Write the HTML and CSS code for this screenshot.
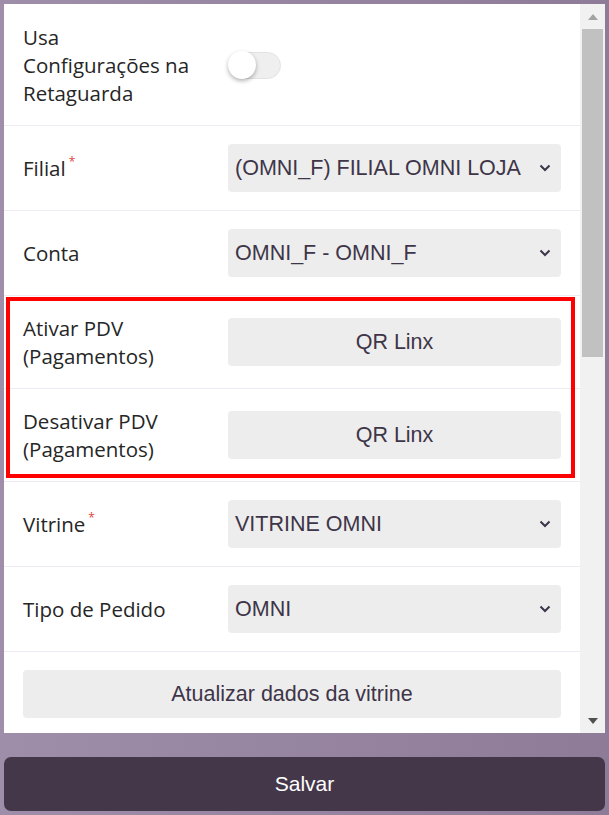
FILE: index.html
```html
<!DOCTYPE html>
<html lang="pt-BR">
<head>
    <meta charset="UTF-8">
    <meta name="viewport" content="width=device-width, initial-scale=1.0">
    <title>Configurações da loja</title>
    <link rel="stylesheet" href="styles.css">
</head>
<body>
    <div class="panel">
        <div class="content">
            <div class="row">
                <div class="label">Usa Configurações na Retaguarda</div>
                <div class="control">
                    <span class="toggle"><span class="knob"></span></span>
                </div>
            </div>

            <div class="row">
                <div class="label">Filial<span class="req">*</span></div>
                <div class="select">
                    <span>(OMNI_F) FILIAL OMNI LOJA</span>
                    <svg class="chevron" width="12" height="8" viewBox="0 0 12 8"><path d="M1.5 1.5 L6 6 L10.5 1.5" fill="none" stroke="currentColor" stroke-width="2"/></svg>
                </div>
            </div>

            <div class="row">
                <div class="label">Conta</div>
                <div class="select">
                    <span>OMNI_F - OMNI_F</span>
                    <svg class="chevron" width="12" height="8" viewBox="0 0 12 8"><path d="M1.5 1.5 L6 6 L10.5 1.5" fill="none" stroke="currentColor" stroke-width="2"/></svg>
                </div>
            </div>

            <div class="highlight">
                <div class="row">
                    <div class="label">Ativar PDV (Pagamentos)</div>
                    <button class="btn">QR Linx</button>
                </div>
                <div class="row">
                    <div class="label">Desativar PDV (Pagamentos)</div>
                    <button class="btn">QR Linx</button>
                </div>
            </div>

            <div class="row">
                <div class="label">Vitrine<span class="req">*</span></div>
                <div class="select">
                    <span>VITRINE OMNI</span>
                    <svg class="chevron" width="12" height="8" viewBox="0 0 12 8"><path d="M1.5 1.5 L6 6 L10.5 1.5" fill="none" stroke="currentColor" stroke-width="2"/></svg>
                </div>
            </div>

            <div class="row">
                <div class="label">Tipo de Pedido</div>
                <div class="select">
                    <span>OMNI</span>
                    <svg class="chevron" width="12" height="8" viewBox="0 0 12 8"><path d="M1.5 1.5 L6 6 L10.5 1.5" fill="none" stroke="currentColor" stroke-width="2"/></svg>
                </div>
            </div>

            <div class="row single">
                <button class="btn">Atualizar dados da vitrine</button>
            </div>
        </div>

        <div class="scrollbar">
            <div class="arrow">
                <svg width="10" height="6" viewBox="0 0 10 6"><path d="M0 6 L5 0 L10 6 Z" fill="#a3a3a3"/></svg>
            </div>
            <div class="track"><div class="thumb"></div></div>
            <div class="arrow">
                <svg width="10" height="6" viewBox="0 0 10 6"><path d="M0 0 L10 0 L5 6 Z" fill="#505050"/></svg>
            </div>
        </div>
    </div>

    <button class="save">Salvar</button>
</body>
</html>
```

FILE: styles.css
```css
* {
    box-sizing: border-box;
}
html, body {
    height: 100%;
}
body {
    margin: 0;
    padding: 4px;
    display: flex;
    flex-direction: column;
    background: linear-gradient(to right, #9e8ea9, #8e7b98);
    font-family: "Open Sans", sans-serif;
    color: #262626;
}

.panel {
    height: 729px;
    background: #fff;
    display: flex;
}
.content {
    flex: 1;
    overflow: hidden;
    padding-top: 1px;
}

.row {
    display: grid;
    grid-template-columns: 170px 1fr;
    column-gap: 35px;
    align-items: center;
    padding: 18px 19px;
    border-bottom: 1px solid #eeebf3;
}
.row.single {
    grid-template-columns: 1fr;
}
.label {
    font-size: 20.5px;
    line-height: 28px;
}
.req {
    color: #e0453c;
    font-size: 12px;
    vertical-align: top;
    line-height: 16px;
    margin-left: 3px;
}

.control {
    display: flex;
    align-items: center;
    height: 48px;
}
.toggle {
    width: 53px;
    height: 27px;
    border-radius: 14px;
    background: #efefef;
    border: 1px solid #e2e2e2;
    display: flex;
    align-items: center;
}
.knob {
    width: 28px;
    height: 28px;
    margin-left: -1px;
    border-radius: 50%;
    background: #fff;
    box-shadow: 0 2px 4px rgba(0, 0, 0, 0.3);
}

.select, .btn {
    height: 48px;
    background: #ededed;
    border: none;
    border-radius: 4px;
    color: #3e3548;
    font-family: "Liberation Sans", Arial, sans-serif;
    font-size: 21.5px;
}
.select {
    display: flex;
    align-items: center;
    justify-content: space-between;
    padding: 0 10px 0 7px;
    white-space: nowrap;
}
.chevron {
    flex: none;
}
.btn {
    width: 100%;
    padding: 0;
}

.highlight {
    position: relative;
}
.highlight::after {
    content: "";
    position: absolute;
    top: 1px;
    left: 2px;
    right: 5px;
    bottom: 4px;
    border: 4px solid #ff0000;
    pointer-events: none;
}

.scrollbar {
    width: 25px;
    background: #f1f1f1;
    display: flex;
    flex-direction: column;
}
.arrow {
    height: 25px;
    display: flex;
    align-items: center;
    justify-content: center;
}
.track {
    flex: 1;
    padding: 0 2px;
}
.thumb {
    height: 328px;
    background: #c1c1c1;
}

.save {
    margin-top: 24px;
    height: 54px;
    border: none;
    border-radius: 7px;
    background: #443749;
    color: #fff;
    font-family: "Liberation Sans", Arial, sans-serif;
    font-size: 21px;
}
```
